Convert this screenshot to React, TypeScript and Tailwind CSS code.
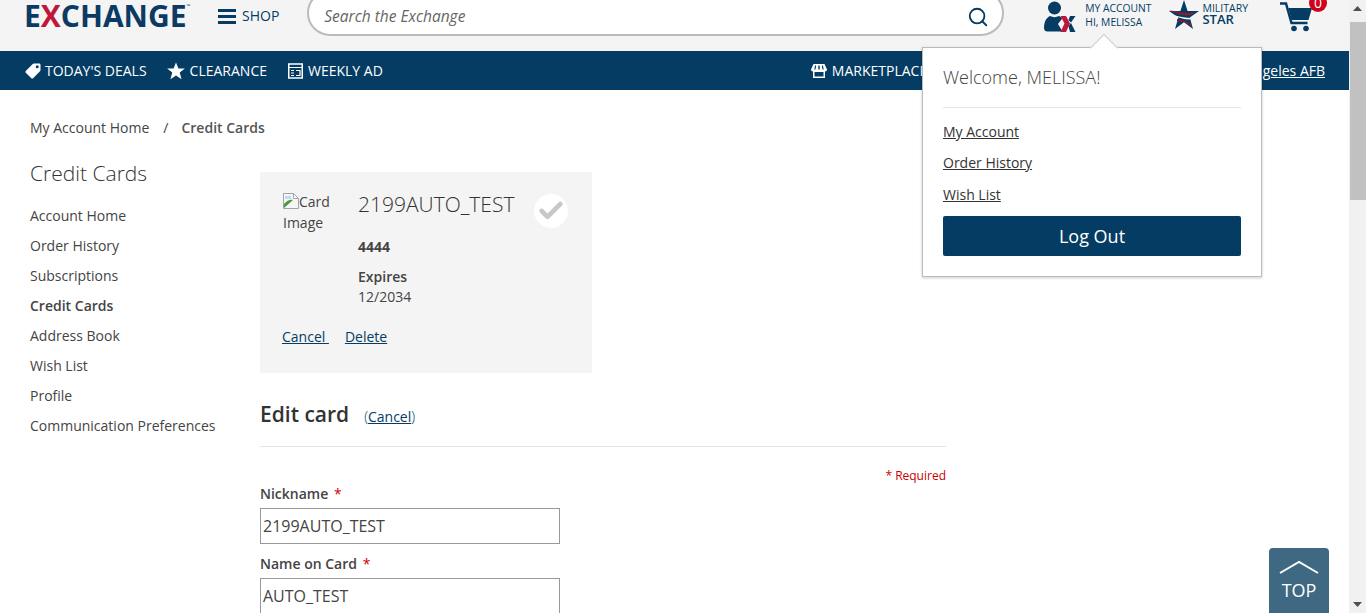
import { Search, Check } from 'lucide-react'

const sideLinks = ['Account Home', 'Order History', 'Subscriptions', 'Credit Cards', 'Address Book', 'Wish List', 'Profile', 'Communication Preferences']

function TagIcon() {
  return (
    <svg width="16" height="16" viewBox="0 0 16 16">
      <path fillRule="evenodd" fill="white" d="M9 .500h5c1 0 1.500.500 1.500 1.500v5c0 .500-.200 1-.500 1.300L8.300 15c-.700.700-1.500.700-2.200 0L1 9.900c-.700-.700-.700-1.500 0-2.200L7.700 1C8 .700 8.500.500 9 .500zM12.200 2.300a1.500 1.500 0 1 0 0 3 1.500 1.500 0 0 0 0-3z" />
    </svg>
  )
}

function StarFilled() {
  return (
    <svg width="18" height="18" viewBox="0 0 18 18">
      <path fill="white" d="M9 .500l2.400 6h6.500l-5.200 4 1.900 6.800L9 13.400l-5.600 3.900 1.900-6.800-5.200-4h6.500z" />
    </svg>
  )
}

function WeeklyAdIcon() {
  return (
    <svg width="15" height="16" viewBox="0 0 15 16" fill="none" stroke="white">
      <rect x=".75" y="1" width="13.500" height="14" strokeWidth="1.500" />
      <path d="M1 4.500h13M3 7.500h3M3 10h3M3 12.500h3M8 7.500h4v5H8" strokeWidth="1.200" />
    </svg>
  )
}

function StoreIcon() {
  return (
    <svg width="16" height="16" viewBox="0 0 16 16">
      <path fill="white" d="M2.500 1h11L16 6.500c0 1.200-1 2-2 2V15H2V8.500c-1 0-2-.800-2-2z" />
      <path fill="#053c63" d="M4 2.500h1.200L4.500 6.500H3.300zM7.300 2.500h1.400v4H7.300zM10.800 2.500H12l.700 4h-1.200zM3.500 9h9v4.500h-9z" />
    </svg>
  )
}

function AccountIcon() {
  return (
    <svg width="32" height="31" viewBox="0 0 32 31">
      <circle cx="10.500" cy="7" r="6.500" fill="#053c63" />
      <path d="M0 27c0-6 2-10 6-12 3 1.500 6 1.500 9 0 1.500.700 2.500 1.500 3.200 2.500L14 23l4.500 7.500H3.500C1.500 30.500 0 29.500 0 27z" fill="#053c63" />
      <path d="M16.500 15H22l4 7.500-4 8.500h-5.500l4-8.500z" fill="#c0163c" />
      <path d="M26 15h5.500L27 21.500 24.500 19zM24.500 25l2.500-3 4.500 9H26z" fill="#053c63" />
    </svg>
  )
}

function StarIcon() {
  return (
    <svg width="30" height="30" viewBox="0 0 30 30">
      <path d="M15 0l3.600 11H30l-9.200 6.600 3.200 11.400-9-6.800L6 29l3.400-11.400L0 11h11.400z" fill="#053c63" />
      <path d="M0 10.500c7 .500 14 2.500 19 2.500 3 0 5-.500 7-1.500-2 3-5 4-8 4-6 0-12-3-18-5z" fill="#8f1a2e" />
      <path d="M6 15.500c6 1.500 11 2.500 16 2.500l-1.500 1.500c-5 0-9.500-1.500-14-3z" fill="#fff" />
      <path d="M8 19c5 .500 10 1.500 14.500 6l.500 2c-4-4-9-6-15-6z" fill="#8f1a2e" />
    </svg>
  )
}

function CartIcon() {
  return (
    <svg width="32" height="30" viewBox="0 0 32 30">
      <path d="M0 1.500h6l5.500 19.500h16" fill="none" stroke="#053c63" strokeWidth="2.500" />
      <path d="M8.500 6H32l-3.500 12H11.500z" fill="#053c63" />
      <circle cx="14" cy="26.500" r="2.800" fill="#053c63" />
      <circle cx="26" cy="26.500" r="2.800" fill="#053c63" />
    </svg>
  )
}

function BrokenImage() {
  return (
    <svg width="16" height="16" viewBox="0 0 16 16" className="inline-block align-[-2px]">
      <path d="M.5.500h10l5 5v10H.5z" fill="#f4f6f8" stroke="#a0a4a8" />
      <path d="M1 11c3-4 7-5 9-4L1 15z" fill="#4d9a3c" />
      <path d="M2 3h6v3H2z" fill="#c3d9f3" />
      <path d="M10.500.500v5h5z" fill="#fff" stroke="#a0a4a8" />
    </svg>
  )
}

export default function App() {
  return (
    <div className="flex h-[613px] w-[1366px] overflow-hidden bg-white text-[14px] text-[#444] font-['Open_Sans',sans-serif]">
      <div className="relative w-[1349px] shrink-0">
        {/* Header */}
        <header className="flex h-[51px] items-start bg-[#f4f4f4]">
          <div className="ml-[24px] flex w-[170px] text-[30px] leading-[31px] font-bold text-[#0b3a64] whitespace-nowrap">
            <span>E<span className="text-[#c0163c]">X</span>CHANGE</span>
            <span className="mt-[3px] text-[5px] leading-[6px] font-normal">™</span>
          </div>
          <div className="ml-[24px] mt-[7px] flex items-center gap-[6px] text-[#053c63]">
            <div className="flex w-[18px] flex-col gap-[3px]">
              <div className="h-[3px] bg-[#053c63]" />
              <div className="h-[3px] bg-[#053c63]" />
              <div className="h-[3px] bg-[#053c63]" />
            </div>
            <span className="text-[14px] leading-[18px]">SHOP</span>
          </div>
          <div className="ml-[28px] mt-[-10px] flex h-[46px] w-[697px] items-center justify-between rounded-[23px] border-2 border-[#bbb] bg-white pl-[15px] pr-[13px] pt-[7px]">
            <span className="text-[15.5px] italic text-[#666]">Search the Exchange</span>
            <Search size={22} strokeWidth={2} className="text-[#053c63]" />
          </div>
          <div className="ml-[40px] mt-[1px] flex items-center gap-[9px]">
            <AccountIcon />
            <div className="mt-[-4px] text-[10.300px] leading-[14px] text-[#053c63]">
              <div>MY ACCOUNT</div>
              <div>HI, MELISSA</div>
            </div>
          </div>
          <div className="ml-[18px] flex items-center gap-[4px]">
            <StarIcon />
            <div className="mt-[-3px] ml-[-1px] text-[#053c63]">
              <div className="text-[10.500px] leading-[11px]">MILITARY</div>
              <div className="text-[13px] leading-[11px] font-semibold">STAR</div>
            </div>
          </div>
          <div className="relative ml-[32px] mt-[2px]">
            <CartIcon />
            <span className="absolute left-[29px] top-[-8px] h-[18px] w-[18px] rounded-full bg-[#d0021b] text-center text-[14px] leading-[18px] text-white">0</span>
          </div>
        </header>

        {/* Nav bar */}
        <nav className="flex h-[39px] items-center bg-[#053c63] pl-[25px] pr-[24px] text-[14px] text-white">
          <span className="flex items-center gap-[4px]"><TagIcon />TODAY'S DEALS</span>
          <span className="ml-[20px] flex items-center gap-[5px]"><StarFilled />CLEARANCE</span>
          <span className="ml-[21px] flex items-center gap-[5px]"><WeeklyAdIcon />WEEKLY AD</span>
          <span className="ml-[428px] flex items-center gap-[5px]"><StoreIcon />MARKETPLACE</span>
          <span className="ml-auto underline">Los Angeles AFB</span>
        </nav>

        {/* Body */}
        <div className="px-[30px] pt-[28px]">
          <div className="flex items-center leading-[20px]">
            <span>My Account Home</span>
            <span className="ml-[14px] mr-[13px]">/</span>
            <span className="font-semibold text-[#555]">Credit Cards</span>
          </div>
          <div className="mt-[21px] flex">
            <aside className="w-[230px] shrink-0">
              <h2 className="text-[21px] font-light leading-[28px] text-[#333]">Credit Cards</h2>
              <ul className="mt-[14px]">
                {sideLinks.map(l => (
                  <li key={l} className={`h-[30px] leading-[30px] ${l === 'Credit Cards' ? 'font-semibold' : ''}`}>{l}</li>
                ))}
              </ul>
            </aside>
            <main className="mt-[13px] w-[686px]">
              <div className="flex h-[201px] w-[332px] flex-col rounded-[2px] bg-[#f4f4f4] px-[22px] pt-[19px]">
                <div className="flex">
                  <div className="w-[76px] shrink-0 pl-[1px] pr-[20px] leading-[21px]"><BrokenImage />Card Image</div>
                  <div className="w-[176px]">
                    <div className="text-[21px] font-light leading-[26px] text-[#333]">2199AUTO_TEST</div>
                    <div className="mt-[20px] font-bold leading-[20px]">4444</div>
                    <div className="mt-[10px] font-semibold leading-[20px]">Expires</div>
                    <div className="leading-[20px]">12/2034</div>
                  </div>
                  <div className="mt-[3px] flex h-[34px] w-[34px] shrink-0 items-center justify-center rounded-full bg-white">
                    <Check size={28} strokeWidth={4} className="text-[#c8c8c8]" />
                  </div>
                </div>
                <div className="mt-[20px] flex gap-[16px] leading-[20px] text-[#053c63]">
                  <span className="underline">Cancel&nbsp;</span>
                  <span className="underline">Delete</span>
                </div>
              </div>
              <div className="mt-[26px] flex h-[48px] items-baseline border-b border-[#e5e5e5] pt-[1px]">
                <h1 className="text-[21px] font-semibold leading-[28px] text-[#333]">Edit card</h1>
                <span className="ml-[15px] text-[#053c63] font-light">(<span className="underline font-normal">Cancel</span>)</span>
              </div>
              <div className="mt-[21px] text-right text-[12px] leading-[16px] text-[#c00]">* Required</div>
              <label className="block font-semibold leading-[20px]">Nickname <span className="ml-[2px] font-normal text-[#c00]">*</span></label>
              <div className="mt-[4px] h-[36px] w-[300px] border border-[#999] pl-[2px] text-[16px] leading-[34px]">2199AUTO_TEST</div>
              <label className="mt-[10px] block font-semibold leading-[20px]">Name on Card <span className="ml-[2px] font-normal text-[#c00]">*</span></label>
              <div className="mt-[4px] h-[36px] w-[300px] border border-[#999] pl-[2px] text-[16px] leading-[34px]">AUTO_TEST</div>
            </main>
          </div>
        </div>

        {/* Account popover */}
        <div className="absolute left-[922px] top-[47px] h-[230px] w-[340px] border border-[#bbb] bg-white px-[20px] pt-[16px] shadow-[0_1px_3px_rgba(0,0,0,0.2)]">
          <div className="absolute left-[171px] top-[-10px] h-[20px] w-[20px] rotate-45 border-l border-t border-[#ccc] bg-white" />
          <div className="relative border-b border-[#e5e5e5] pb-[17px] text-[18px] font-light leading-[26px] text-[#444]">Welcome, MELISSA!</div>
          <div className="mt-[14px] text-[#333] underline leading-[20px]">My Account</div>
          <div className="mt-[11px] text-[#333] underline leading-[20px]">Order History</div>
          <div className="mt-[12px] text-[#333] underline leading-[20px]">Wish List</div>
          <div className="mt-[11px] h-[40px] rounded-[2px] bg-[#053c63] text-center text-[18px] leading-[40px] text-white">Log Out</div>
        </div>

        {/* Back to top */}
        <div className="absolute left-[1269px] top-[548px] flex h-[65px] w-[60px] flex-col items-center rounded-t-[4px] bg-[#3f6882] text-white">
          <svg width="40" height="14" viewBox="0 0 40 14" className="mt-[12px]">
            <path d="M1 13L20 2l19 11" fill="none" stroke="white" strokeWidth="2" />
          </svg>
          <span className="mt-[3px] text-[18px] leading-[26px]">TOP</span>
        </div>
      </div>

      {/* Scrollbar */}
      <div className="flex h-full w-[17px] shrink-0 flex-col justify-between bg-[#f1f1f1]">
        <div>
          <div className="flex h-[17px] items-center justify-center text-[#505050]"><svg width="9" height="5" viewBox="0 0 9 5"><path d="M4.500 0L9 5H0z" fill="currentColor" /></svg></div>
          <div className="ml-[1px] mt-[5px] h-[178px] bg-[#c1c1c1]" />
        </div>
        <div className="flex h-[17px] items-center justify-center text-[#505050]"><svg width="9" height="5" viewBox="0 0 9 5"><path d="M0 0h9L4.500 5z" fill="currentColor" /></svg></div>
      </div>
    </div>
  )
}
